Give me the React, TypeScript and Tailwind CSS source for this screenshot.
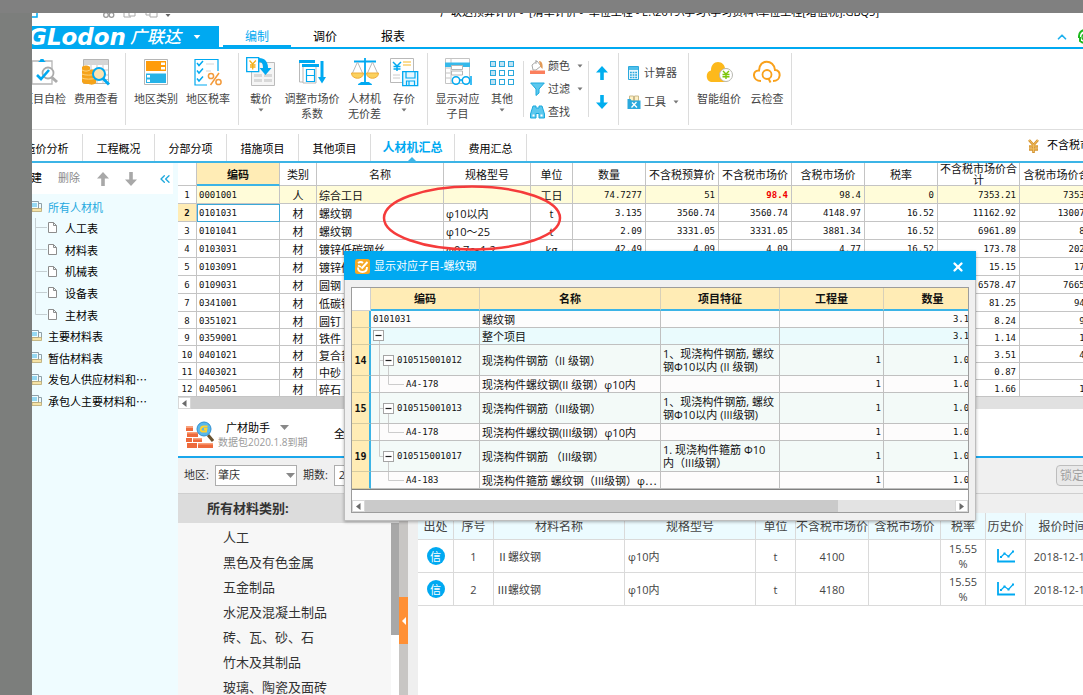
import type { ReactNode } from "react";
import { ChevronUp, ChevronsLeft, X } from "lucide-react";

const BLUE = "#00a9f1";

const mono = "font-['DejaVu_Sans_Mono','Noto_Sans_CJK_SC',monospace] text-[9px]";

// ---------- small shared glyphs ----------

function Caret({ className = "text-[#777]" }: { className?: string }) {
  return (
    <svg width="6" height="4" viewBox="0 0 6 4" className={className} aria-hidden="true">
      <path d="M0.5 0.5h5L3 3.5z" fill="currentColor" />
    </svg>
  );
}

function Arrow({ down = false, className = "" }: { down?: boolean; className?: string }) {
  return (
    <svg width="12" height="14" viewBox="0 0 12 14" className={className} aria-hidden="true">
      <path
        d={down ? "M4.2 0h3.6v7.5H12L6 14 0 7.5h4.2z" : "M4.2 14h3.6V6.5H12L6 0 0 6.5h4.2z"}
        fill="currentColor"
      />
    </svg>
  );
}

function ScrollArrow({ right = false }: { right?: boolean }) {
  return (
    <span className="flex h-full w-[13px] shrink-0 items-center justify-center border border-[#d8d8d8] bg-white">
      <svg width="5" height="7" viewBox="0 0 5 7" aria-hidden="true">
        <path d={right ? "M0.5 0v7L5 3.5z" : "M4.5 0v7L0 3.5z"} fill="#6b6b6b" />
      </svg>
    </span>
  );
}

// ---------- ribbon icons ----------

function CheckDocIcon() {
  return (
    <svg width="28" height="28" viewBox="0 0 28 28" fill="none" aria-hidden="true">
      <path d="M2 3h20v23H2z" stroke="#b5b5b5" strokeWidth="1.3" />
      <path d="M8 4c1-1 2-1 2.500-3h3c.5 2 1.500 2 2.500 3z" fill={BLUE} />
      <circle cx="18" cy="15" r="5.500" fill="#fff" stroke="#ababab" strokeWidth="1.800" />
      <path d="M22 19.500l5 4.500" stroke="#ababab" strokeWidth="3" />
      <path d="M7 17l4 4 8-9" stroke={BLUE} strokeWidth="2.600" />
    </svg>
  );
}

function CostIcon() {
  return (
    <svg width="28" height="28" viewBox="0 0 28 28" fill="none" aria-hidden="true">
      <path d="M1.500 1.500h25v24h-25z" stroke="#b5b5b5" />
      <path d="M2 2h24v5H2z" fill="#d5d5d5" />
      <path d="M2 12h24M2 17h24M2 21.500h24M9 7v18M15 7v18M21 7v18" stroke="#c9c9c9" />
      <path d="M0 9c2-2 6-2 8 0v3c3-1 5 0 6 1v12c-2 2-6 2-7 1-3 0-6 0-7-2z" fill="#f5a31a" />
      <path d="M0 12c3 1.500 5 1.500 8 0M0 16c3 1.500 10 1.500 14 0M0 20c3 1.500 10 1.500 14 0" stroke="#ffd27a" />
      <circle cx="17" cy="16" r="6" fill="#fce3b0" stroke={BLUE} strokeWidth="2" />
      <path d="M21 20.500l6 6" stroke={BLUE} strokeWidth="3" />
    </svg>
  );
}

function RegionTypeIcon() {
  return (
    <svg width="28" height="28" viewBox="0 0 28 28" fill="none" aria-hidden="true">
      <path d="M2.500 1.500h23v25h-23z" stroke="#b5b5b5" />
      <path d="M4 3h20v10H4z" fill="#ff9c0a" />
      <path d="M19 4.500h4v2.500h-4zM19 9h4v2.500h-4z" fill="#fff" />
      <path d="M4 15.500h20v9.500H4z" fill="#26b3e8" />
      <path d="M5 17h3v2.500H5zM5 21.500h3V24H5z" fill="#fff" />
    </svg>
  );
}

function RegionTaxIcon() {
  return (
    <svg width="28" height="28" viewBox="0 0 28 28" fill="none" aria-hidden="true">
      <path d="M24 13V1.500H1V27h12" stroke={BLUE} strokeWidth="1.200" />
      <path d="M3 5l2 2.500L9 3M3 12.500l2 2.500 4-4.500M3 20.500L5 23l4-4.500" stroke={BLUE} strokeWidth="1.500" />
      <path d="M12 6h8M12 13h5" stroke="#d5d5d5" />
      <circle cx="17" cy="18" r="2.600" stroke="#f39a3a" strokeWidth="1.500" />
      <circle cx="24.500" cy="24" r="2.600" stroke="#f39a3a" strokeWidth="1.500" />
      <path d="M25 15l-8.500 12" stroke="#f39a3a" strokeWidth="1.500" />
    </svg>
  );
}

function LoadPriceIcon() {
  return (
    <svg width="30" height="30" viewBox="0 0 30 30" fill="none" aria-hidden="true">
      <path d="M5.500 5.500h23v23h-23z" fill="#f5f5f5" stroke="#bbb" />
      <path d="M8 17h8v3H8zM18 17h8v3h-8zM8 22h8v3H8zM18 22h8v3h-8z" fill="#d8d8d8" />
      <path d="M.7.700h12v14h-12z" fill="#fff" stroke={BLUE} strokeWidth="1.300" />
      <path d="M3.500 3.500L6.700 7l3.200-3.500M6.700 7v5.500M4 8h5.500M4 10h5.500" stroke="#f5b01a" strokeWidth="1.300" />
      <path d="M13 1c6 0 9 4 9 10h3.500l-6 7-6-7H17c0-4-1-6-4-6z" fill={BLUE} />
    </svg>
  );
}

function AdjustIcon() {
  return (
    <svg width="28" height="28" viewBox="0 0 28 28" fill="none" aria-hidden="true">
      <path d="M1 2h16v3H1z" fill={BLUE} />
      <path d="M1.500 5v19H5M5 9v16h13V9" stroke="#b9b9b9" />
      <path d="M4 6h17v3H4z" fill={BLUE} />
      <path d="M8.500 11.500h8v12h-8zM8.500 17.500h8" stroke={BLUE} strokeWidth="1.200" />
      <path d="M22.500 3h3v16H28l-4 6.500-4-6.500h2.500z" fill={BLUE} />
    </svg>
  );
}

function ScaleIcon() {
  return (
    <svg width="28" height="28" viewBox="0 0 28 28" fill="none" aria-hidden="true">
      <path d="M3 3.500h22M14 0v25" stroke={BLUE} strokeWidth="1.800" />
      <path d="M7 27c0-2 3-2 3-3h8c0 1 3 1 3 3z" fill={BLUE} />
      <path d="M6.500 4L1.500 15M6.500 4l5 11M21.500 4l-5 11M21.500 4l5 11" stroke="#b9b9b9" />
      <path d="M.5 15h12c0 7-12 7-12 0zM15.500 15h12c0 7-12 7-12 0z" fill="#fbd15e" stroke="#efad3a" />
    </svg>
  );
}

function SavePriceIcon() {
  return (
    <svg width="30" height="30" viewBox="0 0 30 30" fill="none" aria-hidden="true">
      <path d="M1.500 1.500h23v24h-23z" stroke="#b9b9b9" />
      <path d="M4 5l4 4 4-4M8 9v5M4.500 9.500h7M4.500 12h7" stroke={BLUE} strokeWidth="1.500" />
      <path d="M14 5h8M14 8h8" stroke="#fbdc92" strokeWidth="1.800" />
      <path d="M4 18h7M4 21h7" stroke="#ccc" />
      <path d="M13.700 14.700h15v14h-15z" fill="#e6f7fe" stroke={BLUE} strokeWidth="1.300" />
      <path d="M17 15v6h9v-6M17.500 28.500V24h8v4.500M20 24.500v4" stroke={BLUE} strokeWidth="1.200" />
    </svg>
  );
}

function ShowItemsIcon() {
  return (
    <svg width="28" height="28" viewBox="0 0 28 28" fill="none" aria-hidden="true">
      <path d="M1.500.5h24v25h-24zM7 .5v25M1.500 10h5M1.500 15h5M1.500 20h5" stroke="#c4c4c4" />
      <path d="M1 4.500h25V9H1z" fill="#36b9ea" />
      <path d="M7.500 7.500h11v4h-11zM7.500 13h11v4h-11z" fill="#fff" stroke="#b5b5b5" />
      <circle cx="12" cy="22.500" r="3.700" fill="#fff" stroke={BLUE} strokeWidth="1.500" />
      <circle cx="22" cy="22.500" r="3.700" fill="#fff" stroke={BLUE} strokeWidth="1.500" />
      <path d="M15.700 22h2.600M27 27v-9" stroke={BLUE} strokeWidth="1.500" />
    </svg>
  );
}

function OthersIcon() {
  const steps = [1, 10, 19];
  return (
    <svg width="24" height="28" viewBox="0 0 24 28" fill="none" aria-hidden="true">
      {steps.map((y) =>
        steps.map((x) => (
          <rect
            key={`${x}-${y}`}
            x={x - 0.5}
            y={y + 2.5}
            width="5"
            height="5"
            fill={y === 1 || x === 1 ? "#bfe3f3" : "#fff"}
            stroke="#2ba9dd"
          />
        ))
      )}
    </svg>
  );
}

function CloudPriceIcon() {
  return (
    <svg width="28" height="28" viewBox="0 0 28 28" fill="none" aria-hidden="true">
      <path d="M6 24a6 6 0 0 1 0-11.500C6 7 9 4 13 4s6.500 3 7 6c4 0 6 3 6 6.500S24 24 20 24z" fill="#fdb91c" />
      <circle cx="21" cy="17" r="6.500" fill="#fff" stroke="#b8b8b0" />
      <path d="M18 13l3 3 3-3M21 16v5M17.500 16.500h7M17.500 18.800h7" stroke="#7cc60a" strokeWidth="1.400" />
    </svg>
  );
}

function CloudCheckIcon() {
  return (
    <svg width="28" height="28" viewBox="0 0 28 28" fill="none" aria-hidden="true">
      <path
        d="M8 23C-1 23-1 12 6 12.500 6 1 21 1 22 12c6.500 0 6.500 11-2 11"
        stroke="#f9a11b"
        strokeWidth="2"
      />
      <circle cx="14" cy="16.500" r="4.500" stroke="#f9a11b" strokeWidth="1.800" />
      <path d="M15.500 20.500l2 4" stroke="#f9a11b" strokeWidth="2" />
    </svg>
  );
}

function PaintIcon() {
  return (
    <svg width="15" height="15" viewBox="0 0 15 15" fill="none" aria-hidden="true">
      <path d="M2 6l5-4 4 5-5 4H3z" fill="#fff" stroke="#a8a8a8" />
      <path d="M6 1v4" stroke="#a8a8a8" />
      <path d="M9 2c3 0 4 3 3.500 8l-2-2z" fill="#e39a56" />
      <path d="M0 11.500h15V15H0z" fill="#fb7f5d" />
    </svg>
  );
}

function FunnelIcon() {
  return (
    <svg width="15" height="14" viewBox="0 0 15 14" fill="none" aria-hidden="true">
      <path d="M.7 1h13.600L9 7v4l-3 2.500V7z" fill="#5cc8ee" stroke="#1aa9dd" />
    </svg>
  );
}

function FindIcon() {
  return (
    <svg width="15" height="14" viewBox="0 0 15 14" fill="none" aria-hidden="true">
      <path d="M3 1h3v2h3V1h3l2.500 8v4H9V8.500H6V13H.5V9z" fill="#5cc8ee" stroke="#1aa9dd" />
      <path d="M2.500 9.500h2v2h-2zM10.500 9.500h2v2h-2z" fill="#fff" />
    </svg>
  );
}

function CalcIcon() {
  return (
    <svg width="14" height="14" viewBox="0 0 14 14" fill="none" aria-hidden="true">
      <path d="M1.500.5h10v13h-10z" fill="#eaf7fd" stroke="#2ba9dd" />
      <path d="M2 1h9v3H2z" fill="#4fbfea" />
      <path d="M3 6.500h7M3 9h7M3 11.500h7" stroke="#2ba9dd" strokeWidth="1.300" strokeDasharray="1.800 0.800" />
    </svg>
  );
}

function ToolIcon() {
  return (
    <svg width="14" height="14" viewBox="0 0 14 14" fill="none" aria-hidden="true">
      <path d="M2.500 1h4v5h-4zM7.500 1h4v5h-4z" fill="#fff0c4" stroke="#c9b98a" />
      <path d="M.5 4h3l1 1.500h9V14H.5z" fill="#2ba9dd" />
      <path d="M5 7.500l5 5M9.500 7l-5 5.500" stroke="#fff" strokeWidth="1.300" />
    </svg>
  );
}

// ---------- window chrome ----------

function TitleStrip() {
  return (
    <div className="h-[13px] shrink-0">
      <div className="flex h-[5px] items-end overflow-hidden text-[11px] leading-3">
        <div className="flex w-[408px] shrink-0 items-end">
          <svg width="150" height="12" viewBox="0 0 150 12" fill="none" aria-hidden="true">
            <path d="M0 11h5V6" stroke={BLUE} strokeWidth="1.500" />
            <circle cx="74" cy="9" r="2.300" stroke="#999" strokeWidth="1.300" />
            <circle cx="79.500" cy="9" r="2.300" stroke="#999" strokeWidth="1.300" />
            <path d="M92 4v7h7M97 5h6v5h-6zM114 4v5h4M118 5h7v6h-7z" stroke="#aaa" />
            <path d="M133.500 8h5L136 11z" fill="#666" />
          </svg>
        </div>
        <div className="whitespace-pre">
          {"广联达预算计价 -  [清单计价 -  单位工程 - E:\\2019\\学习\\学习资料\\单位工程[增值税].GBQ5]"}
        </div>
      </div>
    </div>
  );
}

function BrandBar() {
  return (
    <header className="flex h-[23px] shrink-0 border-b-2 border-[#00a9f1]">
      <div className="flex w-[187px] shrink-0 items-center overflow-hidden bg-[#00a9f1] text-white">
        <span className="-ml-1 font-['DejaVu_Sans',sans-serif] text-[23px] leading-5 font-bold italic">
          GLodon
        </span>
        <span className="ml-1 text-[17px] leading-5 font-medium italic">广联达</span>
        <Caret className="ml-3 h-1.5 w-2 text-white" />
      </div>
      <nav className="flex text-xs">
        <button className="ml-1 w-[68px] border-b-2 border-[#00a9f1] pt-0.5 text-[#00a9f1]">编制</button>
        <button className="w-[68px]">调价</button>
        <button className="w-[68px]">报表</button>
      </nav>
      <div className="ml-auto flex w-[28px] items-center gap-2 overflow-hidden">
        <ChevronUp size={14} strokeWidth={3} className="shrink-0 text-[#1fb1ee]" />
        <svg width="16" height="16" viewBox="0 0 16 16" fill="none" className="shrink-0" aria-hidden="true">
          <path d="M2 9V7a6 6 0 0 1 12 0v2M3 8v4l3 2" stroke="#1db81d" strokeWidth="2" />
          <circle cx="8" cy="8" r="3" stroke="#1db81d" strokeWidth="1.500" />
        </svg>
      </div>
    </header>
  );
}

interface RibbonButtonProps {
  icon: ReactNode;
  lines: string[];
  menu?: boolean;
  className: string;
}

function RibbonButton({ icon, lines, menu = false, className }: RibbonButtonProps) {
  return (
    <button className={`flex shrink-0 flex-col items-center pt-1 whitespace-nowrap ${className}`}>
      <span className="flex h-[30px] items-center">{icon}</span>
      <span className="mt-1 leading-[15px]">
        {lines.map((line) => (
          <span key={line} className="block">
            {line}
          </span>
        ))}
      </span>
      {menu ? <span className="mt-0.5"><Caret /></span> : null}
    </button>
  );
}

function SmallButton({ icon, label, menu = false }: { icon: ReactNode; label: string; menu?: boolean }) {
  return (
    <button className="flex items-center gap-[3px] whitespace-nowrap leading-4">
      {icon}
      {label}
      {menu ? <Caret className="ml-1 text-[#777]" /> : null}
    </button>
  );
}

function Ribbon() {
  const group = "flex h-[72px] shrink-0 border-r border-[#dcdcdc]";
  return (
    <div className="flex h-[81px] shrink-0 items-center overflow-hidden border-b border-[#dedede] text-[11px] text-[#444]">
      <div className={`${group} -ml-[17px] w-[111px] justify-center`}>
        <RibbonButton className="w-[52px]" icon={<CheckDocIcon />} lines={["项目自检"]} />
        <RibbonButton className="w-[52px]" icon={<CostIcon />} lines={["费用查看"]} />
      </div>
      <div className={`${group} w-[113px] justify-center`}>
        <RibbonButton className="w-[52px]" icon={<RegionTypeIcon />} lines={["地区类别"]} />
        <RibbonButton className="w-[52px]" icon={<RegionTaxIcon />} lines={["地区税率"]} />
      </div>
      <div className={`${group} w-[189px] pl-px`}>
        <RibbonButton className="w-[42px]" icon={<LoadPriceIcon />} lines={["载价"]} menu />
        <RibbonButton className="w-[60px]" icon={<AdjustIcon />} lines={["调整市场价", "系数"]} />
        <RibbonButton className="w-[45px]" icon={<ScaleIcon />} lines={["人材机", "无价差"]} />
        <RibbonButton className="w-[34px]" icon={<SavePriceIcon />} lines={["存价"]} menu />
      </div>
      <div className="flex h-[72px] w-[95px] shrink-0 pl-0.5">
        <RibbonButton className="w-[55px]" icon={<ShowItemsIcon />} lines={["显示对应", "子目"]} />
        <RibbonButton className="w-[34px]" icon={<OthersIcon />} lines={["其他"]} menu />
      </div>
      <div className="flex h-14 w-[66px] shrink-0 flex-col justify-center gap-[7px] border-x border-[#dcdcdc] pl-1.5">
        <SmallButton icon={<PaintIcon />} label="颜色" menu />
        <SmallButton icon={<FunnelIcon />} label="过滤" menu />
        <SmallButton icon={<FindIcon />} label="查找" />
      </div>
      <div className={`${group} w-[30px] flex-col items-center justify-center gap-[15px] pr-1 pb-1 text-[#00aeef]`}>
        <button aria-label="上移"><Arrow /></button>
        <button aria-label="下移"><Arrow down /></button>
      </div>
      <div className={`${group} w-[70px] flex-col justify-center gap-[13px] pb-1 pl-2`}>
        <SmallButton icon={<CalcIcon />} label="计算器" />
        <SmallButton icon={<ToolIcon />} label="工具" menu />
      </div>
      <div className={`${group} w-[103px] pl-1`}>
        <RibbonButton className="w-[52px]" icon={<CloudPriceIcon />} lines={["智能组价"]} />
        <RibbonButton className="w-[44px]" icon={<CloudCheckIcon />} lines={["云检查"]} />
      </div>
    </div>
  );
}

const TABS = ["造价分析", "工程概况", "分部分项", "措施项目", "其他项目", "人材机汇总", "费用汇总"];

function SectionTabs() {
  return (
    <div className="flex h-[33px] shrink-0 overflow-hidden border-b-2 border-[#3cb4e6] text-[11px]">
      <nav className="-ml-[21px] flex items-end">
        {TABS.map((tab) =>
          tab === "人材机汇总" ? (
            <button
              key={tab}
              className="relative h-[27px] w-[84px] border-r border-[#dcdcdc] text-[12px] leading-4 font-bold text-[#00a9f1]"
            >
              {tab}
              <svg width="8" height="4" viewBox="0 0 8 4" className="absolute bottom-0 left-[37px]" aria-hidden="true">
                <path d="M0 4l4-4 4 4z" fill="#3cb4e6" />
              </svg>
            </button>
          ) : (
            <button key={tab} className="h-[27px] w-[72px] border-r border-[#dcdcdc] pt-0.5 leading-4">
              {tab}
            </button>
          )
        )}
      </nav>
      <div className="ml-auto flex w-[55px] items-center gap-2 overflow-hidden whitespace-nowrap">
        <svg width="11" height="14" viewBox="0 0 11 14" fill="none" className="shrink-0" aria-hidden="true">
          <path d="M1 1l4.500 5L10 1M5.500 6v8M1 7.500h9M1 10.500h9" stroke="#d3922f" strokeWidth="2.600" />
          <path d="M1 1l4.500 5L10 1M5.500 6v7M1.500 7h8M1.500 10h8" stroke="#f2bf5e" />
        </svg>
        不含税市场价合计:
      </div>
    </div>
  );
}

// ---------- tree ----------

interface TreeNode {
  label: string;
  child?: boolean;
  active?: boolean;
}

const TREE: TreeNode[] = [
  { label: "所有人材机", active: true },
  { label: "人工表", child: true },
  { label: "材料表", child: true },
  { label: "机械表", child: true },
  { label: "设备表", child: true },
  { label: "主材表", child: true },
  { label: "主要材料表" },
  { label: "暂估材料表" },
  { label: "发包人供应材料和⋯" },
  { label: "承包人主要材料和⋯" },
];

function ResourceTree() {
  return (
    <aside className="w-[146px] shrink-0 bg-[#effcff] text-[11px]">
      <div className="mr-[5px] flex h-[31px] items-center overflow-hidden bg-white whitespace-nowrap">
        <button className="-ml-3">新建</button>
        <button className="ml-4 text-[#8a8a8a]">删除</button>
        <button className="ml-[17px] text-[#a8a8a8]" aria-label="上移"><Arrow /></button>
        <button className="ml-4 text-[#a8a8a8]" aria-label="下移"><Arrow down /></button>
        <button className="ml-auto text-[#1fa9dd]" aria-label="收起"><ChevronsLeft size={16} /></button>
      </div>
      <ul className="mt-[3px] grid h-[216px] auto-rows-fr">
        {TREE.map((node) => (
          <li key={node.label} className="flex items-center whitespace-nowrap">
            {node.child ? (
              <>
                <svg width="28" height="22" viewBox="0 0 28 22" fill="none" className="shrink-0" aria-hidden="true">
                  <path d={node.label === "主材表" ? "M3.500 0v9.500H15" : "M3.500 0v22M3.500 9.500H15"} stroke="#c5cfd2" />
                  <path d="M16.500 4.500h5l3 3v7h-8zM21.500 4.500v3h3" fill="#fff" stroke="#8d8d8d" />
                </svg>
                <span className="ml-[5px]">{node.label}</span>
              </>
            ) : (
              <>
                <svg width="12" height="16" viewBox="0 0 12 16" fill="none" className="shrink-0" aria-hidden="true">
                  <path d="M0 1.500h6.500v7H0M6.500 3.500h3v6" stroke="#8fa0a8" />
                  <path d="M0 4h5M0 6h5" stroke="#3db5e6" />
                  <path d="M0 8.500h9.500v3H0z" fill="#f6e3a6" stroke="#b9a873" strokeWidth="0.800" />
                </svg>
                <span className={node.active ? "ml-1 text-[#1fa9e0]" : "ml-1"}>{node.label}</span>
              </>
            )}
          </li>
        ))}
      </ul>
    </aside>
  );
}

// ---------- main grid ----------

const GRID_COLS = [
  { title: "", width: "w-[19px]" },
  { title: "编码", width: "w-[83px]" },
  { title: "类别", width: "w-[37px]" },
  { title: "名称", width: "w-[127px]" },
  { title: "规格型号", width: "w-[87px]" },
  { title: "单位", width: "w-[42px]" },
  { title: "数量", width: "w-[73px]" },
  { title: "不含税预算价", width: "w-[73px]" },
  { title: "不含税市场价", width: "w-[73px]" },
  { title: "含税市场价", width: "w-[73px]" },
  { title: "税率", width: "w-[73px]" },
  { title: "不含税市场价合计", width: "w-[82px]" },
  { title: "含税市场价合计", width: "w-[85px]" },
];

// code, type, name, spec, unit, then the numeric columns
const GRID_ROWS: string[][] = [
  ["0001001", "人", "综合工日", "", "工日", "74.7277", "51", "98.4", "98.4", "0", "7353.21", "7353.21"],
  ["0101031", "材", "螺纹钢", "φ10以内", "t", "3.135", "3560.74", "3560.74", "4148.97", "16.52", "11162.92", "13007.02"],
  ["0101041", "材", "螺纹钢", "φ10～25", "t", "2.09", "3331.05", "3331.05", "3881.34", "16.52", "6961.89", "8112"],
  ["0103031", "材", "镀锌低碳钢丝", "φ0.7～1.2", "kg", "42.49", "4.09", "4.09", "4.77", "16.52", "173.78", "202.68"],
  ["0103091", "材", "镀锌低", "", "", "", "", "", "", "", "15.15", "17.65"],
  ["0109031", "材", "圆钢", "", "", "", "", "", "", "", "6578.47", "7665.23"],
  ["0341001", "材", "低碳钢", "", "", "", "", "", "", "", "81.25", "94.67"],
  ["0351021", "材", "圆钉", "", "", "", "", "", "", "", "8.24", "9.60"],
  ["0359001", "材", "铁件", "", "", "", "", "", "", "", "1.14", "1.33"],
  ["0401021", "材", "复合普", "", "", "", "", "", "", "", "3.51", "4.09"],
  ["0403021", "材", "中砂", "", "", "", "", "", "", "", "0.87", ""],
  ["0405061", "材", "碎石", "", "", "", "", "", "", "", "1.66", "1.71"],
];

function gridCellClass(row: number, col: number) {
  if (col === 0) {
    return row === 1
      ? `${mono} pl-0.5 outline outline-1 -outline-offset-1 outline-[#3ba9d8] bg-white`
      : `${mono} pl-0.5`;
  }
  if (col === 1 || col === 4) return "text-center";
  if (col < 4) return "pl-0.5";
  if (row === 0 && col === 7) return `${mono} pr-[3px] text-right font-bold text-[#f00000]`;
  return `${mono} pr-[3px] text-right`;
}

function ResourceGrid() {
  return (
    <div className="relative shrink-0">
      <div className="overflow-hidden">
        <table className="w-[927px] min-w-full table-fixed border-separate border-spacing-0 text-[11px] leading-[11px] text-[#111]">
          <thead>
            <tr className="h-[23px]">
              {GRID_COLS.map((col) => (
                <th
                  key={col.title}
                  className={
                    col.title === "编码"
                      ? `${col.width} border-r border-b-2 border-r-[#c4c4c4] border-b-[#3cb4e6] bg-[#ffecb5] pt-0.5 font-bold`
                      : `${col.width} border-r border-b border-[#c4c4c4] font-normal`
                  }
                >
                  {col.title}
                </th>
              ))}
            </tr>
          </thead>
          <tbody>
            {GRID_ROWS.map((cells, row) => (
              <tr
                key={cells[0]}
                className={`${row < 7 ? "h-[18px]" : "h-[17px]"} ${row === 0 ? "bg-[#fffcd9]" : ""}`}
              >
                <th
                  className={`${mono} border-r border-b border-[#c4c4c4] pt-0.5 ${
                    row === 1 ? "bg-[#ffecb5] font-bold" : "bg-white font-normal"
                  }`}
                >
                  {row + 1}
                </th>
                {cells.map((cell, col) => (
                  <td
                    key={col}
                    className={`overflow-hidden border-r border-b border-[#c4c4c4] pt-0.5 whitespace-nowrap ${gridCellClass(row, col)}`}
                  >
                    {cell}
                  </td>
                ))}
              </tr>
            ))}
          </tbody>
        </table>
      </div>
      <div className="flex h-3 bg-[#e1e1e1]">
        <ScrollArrow />
        <div className="w-[70%] bg-[#cdcdcd]" />
      </div>
      <svg
        width="182"
        height="68"
        viewBox="0 0 182 68"
        fill="none"
        className="pointer-events-none absolute top-[21px] left-[203px]"
        aria-hidden="true"
      >
        <ellipse cx="91" cy="34" rx="88" ry="31.500" stroke="#f53b3b" strokeWidth="2.500" />
      </svg>
    </div>
  );
}

// ---------- material helper ----------

function HelperHeader() {
  return (
    <div className="flex h-[49px] shrink-0 items-center border-b-2 border-[#1aa7ec] pt-1 pl-2">
      <svg width="28" height="28" viewBox="0 0 28 28" fill="none" aria-hidden="true">
        <path d="M0 5h7v5H0zM1 11h11v5H1zM0 17h6v4H0zM7 17h9v4H7zM1 22h10v5H1zM12 22h15v5H12z" fill="#ee6a3c" />
        <path d="M0 5h7v2H0zM1 11h11v1.500H1zM7 17h9v1.500H7zM12 22h15v1.500H12z" fill="#f9a27c" />
        <path d="M22 14l5 6" stroke="#6a5330" strokeWidth="3" />
        <circle cx="18" cy="8" r="7" fill="#58b8ec" stroke="#2e8fd0" />
        <path d="M21.500 5.500h-4c-3 0-4 5-1 5h3.500l.5-2.500h-2.500" stroke="#ffd22e" strokeWidth="1.800" />
      </svg>
      <div className="ml-1 w-[92px] text-center whitespace-nowrap">
        <button className="flex w-full items-center pl-2 text-[11px] leading-[14px]">
          广材助手
          <svg width="9" height="5" viewBox="0 0 9 5" className="ml-2.5" aria-hidden="true">
            <path d="M0 0h9L4.500 5z" fill="#888" />
          </svg>
        </button>
        <p className="text-left text-[10px] leading-[14px] text-[#9a9a9a]">数据包2020.1.8到期</p>
      </div>
      <span className="ml-6 text-[11px]">全部</span>
    </div>
  );
}

function FilterBar() {
  return (
    <div className="flex h-[35px] shrink-0 items-center overflow-hidden bg-[#f0f0f0] pl-1.5 text-[11px] whitespace-nowrap text-[#333]">
      <label htmlFor="region">地区:</label>
      <div className="relative ml-1.5">
        <select id="region" className="h-[21px] w-[82px] appearance-none border border-[#adadad] bg-white pl-0.5">
          <option>肇庆</option>
        </select>
        <svg width="9" height="5" viewBox="0 0 9 5" className="pointer-events-none absolute top-2 right-0.5" aria-hidden="true">
          <path d="M0 0h9L4.500 5z" fill="#888" />
        </svg>
      </div>
      <label htmlFor="period" className="ml-1.5">期数:</label>
      <select id="period" className="ml-1.5 h-[21px] w-[100px] appearance-none border border-[#adadad] bg-white pl-1">
        <option>2018年12月</option>
      </select>
      <div className="ml-auto w-[27px] overflow-hidden">
        <button disabled className="h-[21px] w-[70px] rounded-sm border border-[#bdbdbd] bg-[#e9e9e9] pl-[3px] text-left text-xs text-[#a0a0a0]">
          锁定
        </button>
      </div>
    </div>
  );
}

const CATEGORIES = ["人工", "黑色及有色金属", "五金制品", "水泥及混凝土制品", "砖、瓦、砂、石", "竹木及其制品", "玻璃、陶瓷及面砖"];

function CategoryList() {
  return (
    <div className="flex w-[221px] shrink-0 flex-col bg-[#f7f7f7] text-[13px] text-[#333]">
      <h2 className="h-[30px] shrink-0 border-t border-[#cfcfcf] bg-[#dcdcdc] pl-[29px] leading-[29px] font-bold">
        所有材料类别:
      </h2>
      <div className="flex min-h-0 flex-1 overflow-hidden">
        <ul className="flex-1 pt-px pl-[45px]">
          {CATEGORIES.map((item) => (
            <li key={item} className="h-[25px] leading-[27px]">
              {item}
            </li>
          ))}
        </ul>
        <div className="w-2 bg-white">
          <div className="h-28 bg-[#a8a8a8]" />
        </div>
      </div>
    </div>
  );
}

const PRICE_COLS = [
  { title: "出处", width: "w-[36px]" },
  { title: "序号", width: "w-[40px]" },
  { title: "材料名称", width: "w-[131px]" },
  { title: "规格型号", width: "w-[131px]" },
  { title: "单位", width: "w-[40px]" },
  { title: "不含税市场价", width: "w-[73px]" },
  { title: "含税市场价", width: "w-[72px]" },
  { title: "税率", width: "w-[45px]" },
  { title: "历史价", width: "w-[40px]" },
  { title: "报价时间", width: "w-[74px]" },
];

const PRICES = [
  { id: 1, name: "Ⅱ螺纹钢", spec: "φ10内", unit: "t", price: "4100", rate: "15.55 %", date: "2018-12-10" },
  { id: 2, name: "Ⅲ螺纹钢", spec: "φ10内", unit: "t", price: "4180", rate: "15.55 %", date: "2018-12-10" },
];

function PriceTable() {
  const cell = "border-r border-b border-[#dadada]";
  return (
    <div className="flex min-w-0 flex-1 flex-col overflow-hidden border-t border-[#cfcfcf] bg-[#efefef]">
      <div className="mt-[19px] ml-2.5 flex-1 overflow-hidden bg-white">
        <table className="w-[682px] min-w-full table-fixed border-separate border-spacing-0 text-[11px] text-[#444]">
          <thead>
            <tr className="h-[27px] bg-[#ecfbff] text-xs leading-4 whitespace-nowrap">
              {PRICE_COLS.map((col) => (
                <th key={col.title} className={`${col.width} ${cell} pt-0.5 font-normal`}>
                  {col.title}
                </th>
              ))}
            </tr>
          </thead>
          <tbody>
            {PRICES.map((row) => (
              <tr key={row.id} className="h-[33px] text-center leading-[15px]">
                <td className={cell}>
                  <span className="mx-auto flex size-[18px] items-center justify-center rounded-full bg-[#00a9f1] text-white">
                    信
                  </span>
                </td>
                <td className={cell}>{row.id}</td>
                <td className={`${cell} pl-[3px] text-left`}>{row.name}</td>
                <td className={`${cell} pl-[3px] text-left`}>{row.spec}</td>
                <td className={cell}>{row.unit}</td>
                <td className={cell}>{row.price}</td>
                <td className={cell} />
                <td className={`${cell} px-1`}>{row.rate}</td>
                <td className={cell}>
                  <svg width="18" height="14" viewBox="0 0 18 14" fill="none" className="mx-auto" aria-hidden="true">
                    <path d="M1 0v12.500h17" stroke={BLUE} strokeWidth="1.800" />
                    <path d="M4 8l3.500-3.500L11.500 7.500 16 2.500" stroke={BLUE} strokeWidth="1.200" />
                    <path d="M3 7h2v2H3zM6.500 3.500h2v2h-2zM10.500 6.500h2v2h-2zM15 1.500h2v2h-2z" fill={BLUE} />
                  </svg>
                </td>
                <td className={`${cell} whitespace-nowrap`}>{row.date}</td>
              </tr>
            ))}
          </tbody>
        </table>
      </div>
    </div>
  );
}

// ---------- dialog ----------

const DIALOG_COLS = [
  { title: "编码", width: "w-[109px]" },
  { title: "名称", width: "w-[181px]" },
  { title: "项目特征", width: "w-[119px]" },
  { title: "工程量", width: "w-[104px]" },
  { title: "数量", width: "w-[98px]" },
];

interface DialogRow {
  no?: string;
  kind: "root" | "project" | "item" | "quota";
  code: string;
  name: string;
  feature?: string[];
  amount?: string;
  total: string;
  last?: boolean;
}

const DIALOG_ROWS: DialogRow[] = [
  { kind: "root", code: "0101031", name: "螺纹钢", total: "3.135" },
  { kind: "project", code: "", name: "整个项目", total: "3.135" },
  { no: "14", kind: "item", code: "010515001012", name: "现浇构件钢筋（II 级钢）", feature: ["1、现浇构件钢筋, 螺纹", "钢Φ10以内 (II 级钢)"], amount: "1", total: "1.045" },
  { kind: "quota", code: "A4-178", name: "现浇构件螺纹钢(II 级钢）φ10内", amount: "1", total: "1.045" },
  { no: "15", kind: "item", code: "010515001013", name: "现浇构件钢筋（III级钢）", feature: ["1、现浇构件钢筋, 螺纹", "钢Φ10以内 (III级钢)"], amount: "1", total: "1.045" },
  { kind: "quota", code: "A4-178", name: "现浇构件螺纹钢(III级钢）φ10内", amount: "1", total: "1.045" },
  { no: "19", kind: "item", code: "010515001017", name: "现浇构件钢筋 （III级钢）", feature: ["1. 现浇构件箍筋 Φ10", "内（III级钢）"], amount: "1", total: "1.045", last: true },
  { kind: "quota", code: "A4-183", name: "现浇构件箍筋 螺纹钢（III级钢）φ⋯", amount: "1", total: "1.045", last: true },
];

const DIALOG_ROW_BG = {
  root: "h-[17px] bg-[#fdfdfd]",
  project: "h-[17px] bg-[#eafbfd]",
  item: "h-[31px] bg-[#f3faf8]",
  quota: "h-[17px] bg-[#fdfcfc]",
};

function ToggleBox({ x, y }: { x: number; y: number }) {
  return (
    <>
      <rect x={x + 0.5} y={y + 0.5} width="10" height="10" fill="#fff" stroke="#a5a5a5" />
      <path d={`M${x + 2.5} ${y + 5.500}h6`} stroke="#222" strokeWidth="1.200" />
    </>
  );
}

function DialogCode({ row }: { row: DialogRow }) {
  if (row.kind === "root") return <span className="pl-0.5">{row.code}</span>;
  if (row.kind === "project") {
    return (
      <svg width="26" height="16" viewBox="0 0 26 16" fill="none" aria-hidden="true">
        <path d="M8.500 13v3" stroke="#ccc" />
        <ToggleBox x={2} y={2} />
      </svg>
    );
  }
  if (row.kind === "item") {
    return (
      <div className="flex items-center">
        <svg width="26" height="30" viewBox="0 0 26 30" fill="none" aria-hidden="true">
          <path d={row.last ? "M8.500 0v15.500H12M17.500 20v10" : "M8.500 0v30M8.500 15.500H12M17.500 20v10"} stroke="#ccc" />
          <ToggleBox x={12} y={10} />
        </svg>
        {row.code}
      </div>
    );
  }
  return (
    <div className="flex items-center">
      <svg width="35" height="16" viewBox="0 0 35 16" fill="none" aria-hidden="true">
        <path d={row.last ? "M17.500 0v8.500H33" : "M8.500 0v16M17.500 0v8.500H33"} stroke="#ccc" />
      </svg>
      {row.code}
    </div>
  );
}

function ItemsDialog() {
  const cell = "border-r border-b border-[#c0c0c0]";
  return (
    <section
      role="dialog"
      aria-label="显示对应子目-螺纹钢"
      className="absolute top-[238px] left-[312px] w-[632px] border border-t-0 border-[#bdbdbd] bg-[#f0f0f0] shadow-[0_1px_3px_rgba(0,0,0,0.3)]"
    >
      <div className="-mx-px flex h-[29px] items-center bg-[#00a9f1] px-[11px] pt-0.5 text-[11px] text-white">
        <svg width="15" height="15" viewBox="0 0 15 15" fill="none" aria-hidden="true">
          <rect width="15" height="15" rx="2.500" fill="#f6a823" />
          <path d="M3 4c2-1.500 4-1 5 0M3 6.500l3 1.500M3 8.500c0 4 2 4.500 4.500 4.500 3 0 4.500-2 4.500-5M6.500 9.500L12.500 3" stroke="#fff" strokeWidth="1.900" />
        </svg>
        <h1 className="ml-1">显示对应子目-螺纹钢</h1>
        <button className="ml-auto" aria-label="关闭"><X size={14} strokeWidth={4} /></button>
      </div>
      <div className="mx-1.5 my-[7px] border border-[#9c9c9c] bg-white">
        <div className="overflow-hidden">
          <table className="w-[630px] table-fixed border-separate border-spacing-0 text-[11px] leading-[13px] text-[#111]">
            <thead>
              <tr className="h-[23px]">
                <th className="w-[19px] border-r border-b border-[#d0d0d0] bg-white" />
                {DIALOG_COLS.map((col) => (
                  <th
                    key={col.title}
                    className={`${col.width} border-r border-b-2 border-r-[#d8d0b8] border-b-[#3cb4e6] bg-[#ffecb5] font-bold`}
                  >
                    {col.title}
                  </th>
                ))}
              </tr>
            </thead>
            <tbody>
              {DIALOG_ROWS.map((row, index) => (
                <tr key={index} className={DIALOG_ROW_BG[row.kind]}>
                  <th className="border-r-2 border-b border-r-[#3cb4e6] border-b-[#d6cba0] bg-[#ffecb5] font-['DejaVu_Sans_Mono',monospace] text-[10px]">
                    {row.no}
                  </th>
                  <td className={`${cell} ${mono} leading-none [&_svg]:block`}>
                    <DialogCode row={row} />
                  </td>
                  <td className={`${cell} overflow-hidden pl-0.5 whitespace-nowrap`}>{row.name}</td>
                  <td className={`${cell} overflow-hidden pl-0.5 whitespace-nowrap`}>
                    {row.feature?.map((line) => (
                      <div key={line}>{line}</div>
                    ))}
                  </td>
                  <td className={`${cell} ${mono} pr-0.5 text-right`}>{row.amount}</td>
                  <td className={`${cell} ${mono} pr-px text-right`}>{row.total}</td>
                </tr>
              ))}
            </tbody>
          </table>
        </div>
        <div className="h-[11px] border-t border-[#808080]" />
        <div className="flex h-3 bg-[#e3e3e3]">
          <ScrollArrow />
          <div className="w-[473px] bg-[#cacaca]" />
          <div className="ml-auto"><ScrollArrow right /></div>
        </div>
      </div>
    </section>
  );
}

export default function App() {
  return (
    <div className="h-screen overflow-hidden bg-[#7c7e7c] font-['Open_Sans','Noto_Sans_CJK_SC',sans-serif] text-black">
      <div className="h-full border-t-[13px] border-[#808080] pl-8">
        <div className="relative flex h-full flex-col overflow-hidden bg-white">
          <TitleStrip />
          <BrandBar />
          <Ribbon />
          <SectionTabs />
          <div className="flex min-h-0 flex-1">
            <ResourceTree />
            <main className="flex min-w-0 flex-1 flex-col">
              <ResourceGrid />
              <HelperHeader />
              <FilterBar />
              <div className="flex min-h-0 flex-1">
                <CategoryList />
                <div className="w-[9px] shrink-0 bg-[#c8c6c4] pt-[104px]">
                  <button className="flex h-[47px] w-full items-center justify-center bg-[#ff9035]" aria-label="收起分类">
                    <svg width="4" height="8" viewBox="0 0 4 8" aria-hidden="true">
                      <path d="M4 0v8L0 4z" fill="#fff" />
                    </svg>
                  </button>
                </div>
                <PriceTable />
              </div>
            </main>
          </div>
          <ItemsDialog />
        </div>
      </div>
    </div>
  );
}
